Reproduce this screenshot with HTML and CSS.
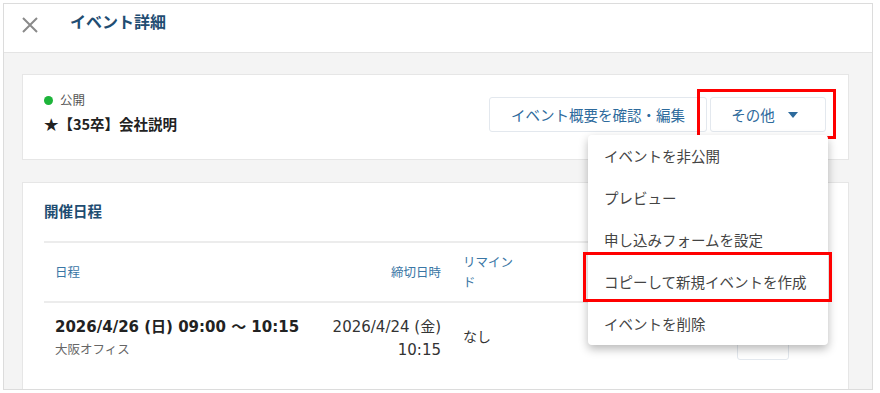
FILE: index.html
```html
<!DOCTYPE html>
<html lang="ja">
<head>
    <meta charset="UTF-8">
    <meta name="viewport" content="width=device-width, initial-scale=1.0">
    <title>イベント詳細</title>
    <link rel="stylesheet" href="styles.css">
</head>
<body>
    <div class="app">
        <header class="page-header">
            <button class="close-btn" aria-label="閉じる">
                <svg width="18" height="18" viewBox="0 0 18 18">
                    <path d="M2 2 L16 16 M16 2 L2 16" stroke="#8a8a8a" stroke-width="2" fill="none"/>
                </svg>
            </button>
            <h1>イベント詳細</h1>
        </header>

        <main class="content">
            <!-- Event summary -->
            <section class="card summary">
                <div class="summary-info">
                    <div class="status"><span class="dot"></span>公開</div>
                    <div class="event-name">★【35卒】会社説明</div>
                </div>
                <div class="actions">
                    <button class="btn">イベント概要を確認・編集</button>
                    <div class="more">
                        <button class="btn btn-more">その他<span class="caret"></span></button>
                        <span class="highlight highlight-more"></span>
                        <ul class="dropdown">
                            <li>イベントを非公開</li>
                            <li>プレビュー</li>
                            <li>申し込みフォームを設定</li>
                            <li>コピーして新規イベントを作成</li>
                            <li>イベントを削除</li>
                            <span class="highlight highlight-copy"></span>
                        </ul>
                    </div>
                </div>
            </section>

            <!-- Schedule -->
            <section class="card schedule">
                <h2>開催日程</h2>
                <table class="schedule-table">
                    <colgroup>
                        <col class="col-date">
                        <col class="col-deadline">
                        <col class="col-remind">
                        <col>
                    </colgroup>
                    <thead>
                        <tr>
                            <th>日程</th>
                            <th class="right">締切日時</th>
                            <th>リマインド</th>
                            <th></th>
                        </tr>
                    </thead>
                    <tbody>
                        <tr>
                            <td>
                                <div class="date">2026/4/26 (日) 09:00 ～ 10:15</div>
                                <div class="place">大阪オフィス</div>
                            </td>
                            <td class="right deadline">2026/4/24 (金)<br>10:15</td>
                            <td class="remind">なし</td>
                            <td class="right"><button class="btn btn-small">&nbsp;</button></td>
                        </tr>
                    </tbody>
                </table>
            </section>
        </main>
    </div>
</body>
</html>
```

FILE: styles.css
```css
body {
    margin: 0;
    background: #fff;
    font-family: "Noto Sans CJK JP", "Noto Sans", sans-serif;
    color: #333;
}

.app {
    box-sizing: border-box;
    width: 870px;
    height: 387px;
    margin: 3px;
    border: 1px solid #dcdcdc;
    background: #f4f4f4;
    overflow: hidden;
}

/* Header */
.page-header {
    display: flex;
    align-items: flex-start;
    height: 48px;
    background: #fff;
    border-bottom: 1px solid #e4e4e4;
}

.close-btn {
    display: flex;
    padding: 0;
    margin: 12px 0 0 17px;
    border: none;
    background: transparent;
    cursor: pointer;
}

.page-header h1 {
    margin: 5px 0 0 31px;
    font-size: 16px;
    font-weight: bold;
    line-height: 24px;
    color: #1f4d72;
}

/* Cards */
.content {
    padding: 21px 23px 0 18px;
}

.card {
    background: #fff;
    border: 1px solid #e6e6e6;
}

.summary {
    display: flex;
    justify-content: space-between;
    align-items: center;
    height: 84px;
    padding: 0 22px 0 21px;
    position: relative;
    z-index: 2;
}

.summary-info {
    margin-top: -8px;
}

.status {
    display: flex;
    align-items: center;
    font-size: 12.5px;
    line-height: 20px;
    color: #555;
}

.dot {
    width: 9px;
    height: 9px;
    border-radius: 50%;
    background: #1db43a;
    margin-right: 7px;
}

.event-name {
    margin-top: 2px;
    font-size: 14.5px;
    font-weight: bold;
    line-height: 24px;
    color: #222;
}

.actions {
    display: flex;
    gap: 3px;
    margin-top: -5px;
}

.btn {
    height: 35px;
    padding: 0 21px;
    border: 1px solid #e3e8ee;
    border-radius: 3px;
    background: #fff;
    font-family: inherit;
    font-size: 14.5px;
    color: #2d6a9c;
    cursor: pointer;
}

.more {
    position: relative;
}

.btn-more {
    width: 116px;
    display: flex;
    align-items: center;
    justify-content: center;
    gap: 13px;
    padding-left: 14px;
}

.caret {
    width: 0;
    height: 0;
    border-left: 5px solid transparent;
    border-right: 5px solid transparent;
    border-top: 6px solid #2d6a9c;
}

.highlight {
    position: absolute;
    border: 3px solid #f00;
    box-sizing: border-box;
    pointer-events: none;
}

.highlight-more {
    left: -13px;
    top: -8px;
    width: 139px;
    height: 50px;
}

/* Dropdown menu */
.dropdown {
    position: absolute;
    left: -122px;
    top: 38px;
    width: 240px;
    margin: 0;
    padding: 0;
    list-style: none;
    background: #fff;
    border-radius: 4px;
    box-shadow: 0 4px 10px rgba(0, 0, 0, 0.28);
    z-index: 10;
}

.dropdown li {
    height: 42px;
    line-height: 42px;
    padding-left: 16px;
    font-size: 14.5px;
    color: #444;
    white-space: nowrap;
}

.highlight-copy {
    left: -5px;
    top: 117px;
    width: 249px;
    height: 50px;
}

/* Schedule */
.schedule {
    margin-top: 22px;
    padding: 16px 21px 0;
    height: 300px;
}

.schedule h2 {
    margin: 0 0 18px;
    font-size: 14.5px;
    line-height: 24px;
    color: #1f4d72;
}

.schedule-table {
    width: 100%;
    border-collapse: collapse;
    table-layout: fixed;
    border-top: 2px solid #ececec;
}

.col-date { width: 276px; }
.col-deadline { width: 132px; }
.col-remind { width: 76px; }

.schedule-table th {
    height: 58px;
    padding: 0 11px;
    text-align: left;
    font-size: 12.5px;
    font-weight: normal;
    line-height: 20px;
    color: #3a76a5;
    border-bottom: 2px solid #ececec;
}

.schedule-table td {
    padding: 13px 11px 0;
    vertical-align: top;
}

.schedule-table .right {
    text-align: right;
}

.date {
    font-family: "DejaVu Sans", "Noto Sans CJK JP", sans-serif;
    font-size: 15px;
    font-weight: bold;
    line-height: 22px;
    color: #222;
}

.place {
    font-size: 12.5px;
    line-height: 22px;
    color: #666;
}

.deadline {
    font-family: "DejaVu Sans", "Noto Sans CJK JP", sans-serif;
    font-size: 15px;
    line-height: 23px;
    color: #333;
}

.schedule-table .remind {
    padding-top: 22px;
    font-size: 14px;
    line-height: 22px;
    color: #333;
}

.btn-small {
    width: 52px;
    height: 32px;
    margin-top: 12px;
    margin-right: 27px;
}
```
